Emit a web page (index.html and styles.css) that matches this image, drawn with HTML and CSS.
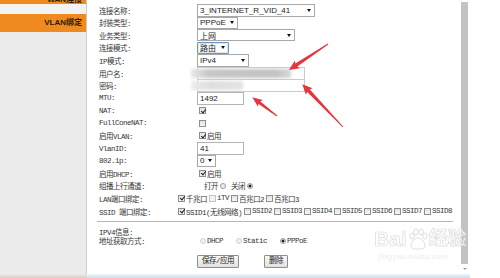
FILE: index.html
```html
<!DOCTYPE html>
<html lang="zh-CN">
<head>
    <meta charset="UTF-8">
    <meta name="viewport" content="width=device-width, initial-scale=1.0">
    <title>VLAN绑定</title>
    <link rel="stylesheet" href="styles.css">
</head>
<body>
    <div class="frame">
        <nav class="sidebar">
            <div class="side-item side-item--cut">WAN连接</div>
            <div class="side-item">VLAN绑定</div>
        </nav>

        <form class="main">
            <div class="form-row"><span class="label">连接名称:</span><div class="value"><span class="select select--name">3_INTERNET_R_VID_41</span></div></div>
            <div class="form-row"><span class="label">封装类型:</span><div class="value"><span class="select select--mode">PPPoE</span></div></div>
            <div class="form-row"><span class="label">业务类型:</span><div class="value"><span class="select select--service">上网</span></div></div>
            <div class="form-row"><span class="label">连接模式:</span><div class="value"><span class="select select--route select--focus">路由</span></div></div>
            <div class="form-row"><span class="label">IP模式:</span><div class="value"><span class="select select--ip">IPv4</span></div></div>
            <div class="form-row"><span class="label">用户名:</span><div class="value"><div class="field"><span class="smudge smudge--dark"></span></div></div></div>
            <div class="form-row"><span class="label">密码:</span><div class="value"><div class="field"><span class="smudge smudge--light"></span></div></div></div>
            <div class="form-row"><span class="label">MTU:</span><div class="value"><input class="text-input" type="text" value="1492"></div></div>
            <div class="form-row"><span class="label">NAT:</span><div class="value"><input class="cb" type="checkbox" checked></div></div>
            <div class="form-row"><span class="label">FullConeNAT:</span><div class="value"><input class="cb" type="checkbox"></div></div>
            <div class="form-row"><span class="label">启用VLAN:</span><div class="value"><label class="opt"><input class="cb" type="checkbox" checked>启用</label></div></div>
            <div class="form-row"><span class="label">VlanID:</span><div class="value"><input class="text-input" type="text" value="41"></div></div>
            <div class="form-row"><span class="label">802.1p:</span><div class="value"><span class="select select--prio">0</span></div></div>
            <div class="form-row"><span class="label">启用DHCP:</span><div class="value"><label class="opt"><input class="cb" type="checkbox" checked>启用</label></div></div>
            <div class="form-row"><span class="label">组播上行通道:</span>
                <div class="value value--toggle">
                    <label class="opt opt--rev">打开<input class="rd" type="radio" name="mc"></label>
                    <label class="opt opt--rev">关闭<input class="rd" type="radio" name="mc" checked></label>
                </div>
            </div>
            <div class="form-row"><span class="label">LAN端口绑定:</span>
                <div class="value value--wide">
                    <label class="opt"><input class="cb" type="checkbox" checked>千兆口</label>
                    <label class="opt"><input class="cb cb--faint" type="checkbox">iTV</label>
                    <label class="opt"><input class="cb" type="checkbox">百兆口2</label>
                    <label class="opt"><input class="cb" type="checkbox">百兆口3</label>
                </div>
            </div>
            <div class="form-row"><span class="label">SSID 端口绑定:</span>
                <div class="value value--wide">
                    <label class="opt"><input class="cb" type="checkbox" checked>SSID1(无线网络)</label>
                    <label class="opt"><input class="cb" type="checkbox">SSID2</label>
                    <label class="opt"><input class="cb" type="checkbox">SSID3</label>
                    <label class="opt"><input class="cb" type="checkbox">SSID4</label>
                    <label class="opt"><input class="cb" type="checkbox">SSID5</label>
                    <label class="opt"><input class="cb" type="checkbox">SSID6</label>
                    <label class="opt"><input class="cb" type="checkbox">SSID7</label>
                    <label class="opt"><input class="cb" type="checkbox">SSID8</label>
                </div>
            </div>

            <hr class="divider">

            <div class="form-row form-row--short"><span class="label">IPV4信息:</span></div>
            <div class="form-row form-row--short"><span class="label">地址获取方式:</span>
                <div class="value value--addr">
                    <label class="opt opt--spaced"><input class="rd" type="radio" name="addr" disabled>DHCP</label>
                    <label class="opt opt--spaced"><input class="rd" type="radio" name="addr" disabled>Static</label>
                    <label class="opt opt--spaced"><input class="rd" type="radio" name="addr" checked>PPPoE</label>
                </div>
            </div>

            <div class="actions">
                <button class="btn" type="button">保存/应用</button>
                <button class="btn" type="button">删除</button>
            </div>
        </form>

        <div class="scrollbar">
            <div class="scroll-thumb"></div>
            <div class="scroll-arrow"></div>
        </div>
        <div class="blank"></div>
    </div>
    <div class="bottom-band"><span class="band-side"></span><span class="band-main"></span></div>

    <!-- red arrows drawn over the form -->
    <svg class="annotations" width="500" height="278" viewBox="0 0 500 278">
        <g fill="#e5353d">
            <polygon transform="translate(328 44) rotate(146.3)" points="0,-0.5 38,-1.8 37,-4.5 47,0 37,4.5 38,1.8 0,0.5"/>
            <polygon transform="translate(343 127) rotate(-133.6)" points="0,-0.5 50,-1.9 49,-4.6 59,0 49,4.6 50,1.9 0,0.5"/>
            <polygon transform="translate(277 116) rotate(-142.8)" points="0,-0.5 22,-1.5 21,-4 31,0 21,4 22,1.5 0,0.5"/>
        </g>
    </svg>

    <div class="watermark" aria-hidden="true">
        <div class="wm-logo">
            <span class="wm-bai">Bai</span>
            <svg class="wm-paw" width="20" height="22" viewBox="0 0 20 22">
                <g fill="#fff" stroke="#d2d2d2" stroke-width="1">
                    <ellipse cx="4" cy="8" rx="2.2" ry="3"/>
                    <ellipse cx="8" cy="4" rx="2.2" ry="3"/>
                    <ellipse cx="13" cy="4" rx="2.2" ry="3"/>
                    <ellipse cx="17" cy="8" rx="2.2" ry="3"/>
                    <path d="M10 10c-4 0-7 5-7 8 0 3 3 3 7 3s7 0 7-3c0-3-3-8-7-8z"/>
                </g>
            </svg>
            <span class="wm-jy">经验</span>
        </div>
        <div class="wm-url">jingyan.baidu.com</div>
    </div>
</body>
</html>
```

FILE: styles.css
```css
body {
    margin: 0;
    width: 500px;
    height: 278px;
    overflow: hidden;
    position: relative;
    background: #fff;
    font-family: "Liberation Mono", "Noto Sans CJK SC", monospace;
    font-size: 7.5px;
    letter-spacing: -0.5px;
    color: #363636;
}
.frame {
    display: flex;
    height: 274px;
}
.sidebar {
    width: 86px;
    flex: none;
    border-right: 1px solid #cdcdcd;
    background: linear-gradient(#f3f3f3 0 14px, #ebebeb 14px);
}
.side-item {
    height: 18px;
    line-height: 18px;
    padding-right: 4px;
    text-align: right;
    background: #ef8a20;
    color: #2a1a06;
    font-family: "Liberation Sans", "Noto Sans CJK SC", sans-serif;
    font-weight: bold;
    font-size: 8px;
    letter-spacing: 0;
}
.side-item--cut {
    height: 4px;
    line-height: 0;
    overflow: hidden;
}
.side-item + .side-item {
    margin-top: 10px;
}

.main {
    width: 361px;
    flex: none;
    margin: 0;
    padding: 4px 0 0 12px;
}
.form-row {
    display: grid;
    grid-template-columns: 79px 19px 1fr;
    align-items: center;
    height: 12.55px;
}
.form-row--short {
    height: 9.5px;
}
.label {
    grid-column: 1;
    white-space: nowrap;
}
.value {
    grid-column: 3;
    display: flex;
    align-items: center;
    white-space: nowrap;
}
.value--wide {
    grid-column: 2 / 4;
}
.value--toggle {
    padding-left: 7px;
}
.value--addr {
    padding-left: 3px;
}

/* fake select boxes */
.select {
    box-sizing: border-box;
    height: 12px;
    display: flex;
    align-items: center;
    justify-content: space-between;
    padding: 0 3px 0 2px;
    border: 1px solid #a8a8a8;
    background: #fff;
    font-family: "Liberation Sans", "Noto Sans CJK SC", sans-serif;
    font-size: 8px;
    letter-spacing: 0;
    color: #222;
}
.select::after {
    content: "";
    border-left: 2px solid transparent;
    border-right: 2px solid transparent;
    border-top: 3px solid #111;
}
.select--name { width: 118px; height: 13px; }
.select--mode { width: 41px; }
.select--service { width: 98px; }
.select--route { width: 32px; }
.select--ip { width: 52px; height: 13px; }
.select--prio { width: 19px; }
.select--focus {
    border-color: #7094c2;
    box-shadow: inset 0 0 0 1px #dce7f4;
    border-radius: 1px;
}

.field {
    box-sizing: border-box;
    width: 108px;
    height: 13px;
    border: 1px solid #cbcbcb;
}
.smudge {
    display: block;
    height: 9px;
    margin: 1px 0 0 -7px;
    filter: blur(1.5px);
}
.smudge--dark {
    width: 100px;
    background: linear-gradient(90deg, #e8e8e8, #c6c6c6 18%, #c3c3c3 85%, #d8d8d8);
}
.smudge--light {
    width: 52px;
    background: linear-gradient(90deg, #ececec, #dedede 40%, #e4e4e4);
}

.text-input {
    box-sizing: border-box;
    width: 47px;
    height: 13px;
    margin: 0;
    padding: 0 2px;
    border: 1px solid #b4b4b4;
    font-family: "Liberation Sans", sans-serif;
    font-size: 8px;
    letter-spacing: 0;
    color: #222;
}

.opt {
    display: flex;
    align-items: center;
    gap: 1px;
    margin-right: 2px;
}
.opt--rev {
    gap: 2px;
    margin-right: 5px;
}
.opt--spaced {
    margin-right: 13px;
}
.cb {
    appearance: none;
    position: relative;
    box-sizing: border-box;
    width: 7px;
    height: 7px;
    margin: 0 0 0 2px;
    border: 1px solid #8e8e8e;
    background: linear-gradient(#e2e2e2, #f7f7f7);
}
.value--wide .cb {
    margin-left: 0;
}
.cb--faint {
    border-color: #c4c4c4;
    background: #f3f3f3;
}
.cb:checked::after {
    content: "";
    position: absolute;
    left: 1.5px;
    top: -0.5px;
    width: 2px;
    height: 4px;
    border: solid #1e1e1e;
    border-width: 0 1.3px 1.3px 0;
    transform: rotate(40deg);
}
.rd {
    appearance: none;
    box-sizing: border-box;
    width: 6px;
    height: 6px;
    margin: 0;
    border-radius: 50%;
    border: 1px solid #9c9c9c;
    background: #ececec;
}
.rd:checked {
    background: radial-gradient(circle, #222 0 1.3px, #eee 1.7px);
}
.rd:disabled {
    border-color: #d2d2d2;
    background: #f2f2f2;
}

.divider {
    margin: 4px 7px 0 -2px;
    height: 0;
    border: 0;
    border-top: 1px solid #b7b7b7;
}
.divider + .form-row {
    margin-top: 3.5px;
}

.actions {
    display: flex;
    gap: 25px;
    margin-top: 10px;
    padding-left: 98px;
}
.btn {
    height: 13px;
    margin: 0;
    padding: 0 4px;
    border: 1px solid #8e8e8e;
    border-radius: 1px;
    background: linear-gradient(#f7f7f7, #e1e1e1);
    font-family: inherit;
    font-size: 7.5px;
    letter-spacing: -0.5px;
    line-height: 11px;
    color: #222;
}

.scrollbar {
    width: 10px;
    flex: none;
}
.scroll-thumb {
    height: 262px;
    margin: 2px 2px 0 1px;
    background: #c3c3c3;
}
.scroll-arrow {
    width: 0;
    margin: 4px auto 0;
    border-left: 2px solid transparent;
    border-right: 2px solid transparent;
    border-top: 2px solid #9a9a9a;
}
.blank {
    flex: 1;
}

.bottom-band {
    display: flex;
    height: 4px;
}
.band-side {
    width: 87px;
    background: linear-gradient(#efe9e2, #d9cfc4);
}
.band-main {
    width: 383px;
    background: linear-gradient(#eef6fa, #cfdde6);
}

.annotations {
    position: absolute;
    left: 0;
    top: 0;
    pointer-events: none;
}

.watermark {
    position: absolute;
    left: 374px;
    top: 228px;
    opacity: 0.75;
    letter-spacing: 0;
}
.wm-logo {
    display: flex;
    align-items: flex-end;
    gap: 1px;
}
.wm-bai,
.wm-jy {
    font-family: "Liberation Sans", "Noto Sans CJK SC", sans-serif;
    font-weight: bold;
    font-size: 21px;
    line-height: 22px;
    color: #fff;
    -webkit-text-stroke: 0.7px #cfcfcf;
}
.wm-jy {
    font-size: 19px;
}
.wm-url {
    margin-top: 2px;
    padding-left: 4px;
    font-family: "Liberation Sans", sans-serif;
    font-weight: bold;
    font-size: 8px;
    color: #ececec;
}
```
